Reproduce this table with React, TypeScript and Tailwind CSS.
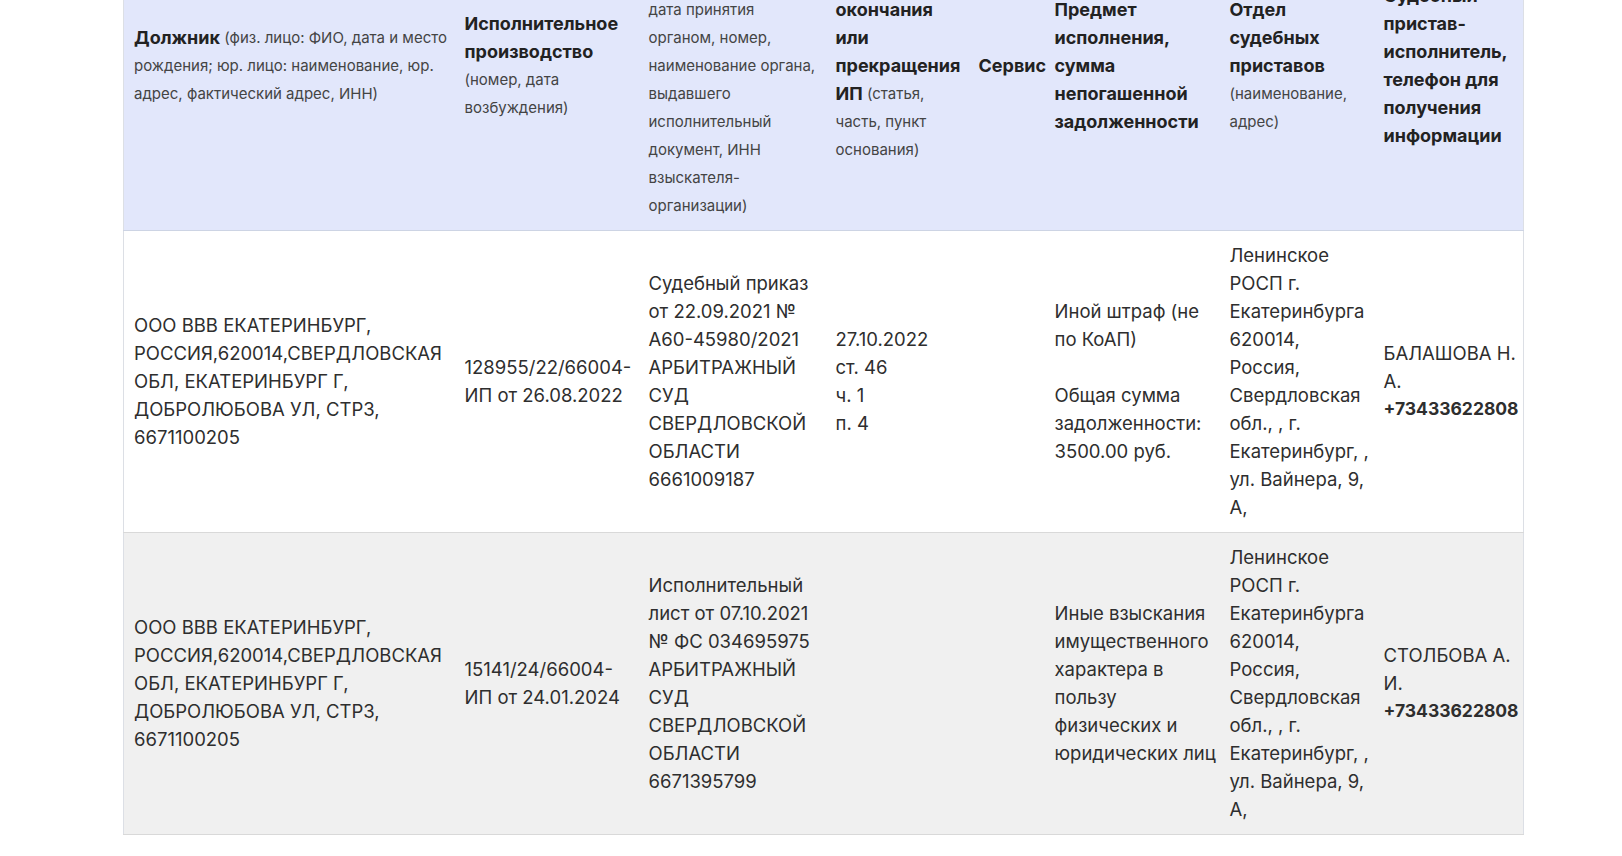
import React from 'react';

/** Строка таблицы исполнительных производств (строки ячеек — как в выдаче) */
interface Row {
  id: string;
  debtor: string[];
  proceeding: string[];
  document: string[];
  ending: string[];
  subject: string[];
  department: string[];
  officer: string[];
  phone: string;
}

const DEPARTMENT = [
  'Ленинское',
  'РОСП г.',
  'Екатеринбурга',
  '620014,',
  'Россия,',
  'Свердловская',
  'обл., , г.',
  'Екатеринбург, ,',
  'ул. Вайнера, 9,',
  'А,',
];

const DEBTOR = [
  'ООО ВВВ ЕКАТЕРИНБУРГ,',
  'РОССИЯ,620014,СВЕРДЛОВСКАЯ',
  'ОБЛ, ЕКАТЕРИНБУРГ Г,',
  'ДОБРОЛЮБОВА УЛ, СТР3,',
  '6671100205',
];

const rows: Row[] = [
  {
    id: '128955',
    debtor: DEBTOR,
    proceeding: ['128955/22/66004-', 'ИП от 26.08.2022'],
    document: [
      'Судебный приказ',
      'от 22.09.2021 №',
      'А60-45980/2021',
      'АРБИТРАЖНЫЙ',
      'СУД',
      'СВЕРДЛОВСКОЙ',
      'ОБЛАСТИ',
      '6661009187',
    ],
    ending: ['27.10.2022', 'ст. 46', 'ч. 1', 'п. 4'],
    subject: ['Иной штраф (не', 'по КоАП)', '', 'Общая сумма', 'задолженности:', '3500.00 руб.'],
    department: DEPARTMENT,
    officer: ['БАЛАШОВА Н.', 'А.'],
    phone: '+73433622808',
  },
  {
    id: '15141',
    debtor: DEBTOR,
    proceeding: ['15141/24/66004-', 'ИП от 24.01.2024'],
    document: [
      'Исполнительный',
      'лист от 07.10.2021',
      '№ ФС 034695975',
      'АРБИТРАЖНЫЙ',
      'СУД',
      'СВЕРДЛОВСКОЙ',
      'ОБЛАСТИ',
      '6671395799',
    ],
    ending: [],
    subject: [
      'Иные взыскания',
      'имущественного',
      'характера в',
      'пользу',
      'физических и',
      'юридических лиц',
    ],
    department: DEPARTMENT,
    officer: ['СТОЛБОВА А.', 'И.'],
    phone: '+73433622808',
  },
];

const th = 'pl-[10px] pr-0 py-[10px] align-middle text-left font-normal whitespace-nowrap';
const td = 'pl-[10px] pr-0 pt-[10px] pb-[11px] align-middle whitespace-nowrap';

function Lines({ lines }: { lines: string[] }) {
  return (
    <>
      {lines.map((line, i) => (
        <div key={i} className="h-[28px]">
          {line}
        </div>
      ))}
    </>
  );
}

/** жирный заголовок колонки */
const B = ({ children }: { children: React.ReactNode }) => (
  <span className="align-top font-bold text-[18px] text-[#222]">{children}</span>
);

/** пояснение мелким шрифтом */
const S = ({ children }: { children: React.ReactNode }) => (
  <span className="align-top text-[15px] text-[#444]">{children}</span>
);

export default function App() {
  return (
    <div className="h-[856px] overflow-hidden bg-white">
      {/* страница прокручена: шапка таблицы частично скрыта сверху */}
      <div className="-mt-[98px] pl-[123px]">
        <table className="w-[1400px] table-fixed border-collapse border-x border-[#dcdfe5] leading-[28px] font-['Inter',sans-serif] text-[18.5px] text-[#2e2e2e]">
          <colgroup>
            <col className="w-[331px]" />
            <col className="w-[184px]" />
            <col className="w-[187px]" />
            <col className="w-[143px]" />
            <col className="w-[76px]" />
            <col className="w-[175px]" />
            <col className="w-[154px]" />
            <col className="w-[150px]" />
          </colgroup>
          <thead className="bg-[#e2e7fb] text-[15px]">
            <tr className="border-b border-[#cdd4e4]">
              <th className={th}>
                <B>Должник</B>{' '}
                <S>
                  (физ. лицо: ФИО, дата и место
                  <br />
                  рождения; юр. лицо: наименование, юр.
                  <br />
                  адрес, фактический адрес, ИНН)
                </S>
              </th>
              <th className={th}>
                <B>
                  Исполнительное
                  <br />
                  производство
                </B>
                <br />
                <S>
                  (номер, дата
                  <br />
                  возбуждения)
                </S>
              </th>
              <th className={th}>
                <B>
                  Реквизиты
                  <br />
                  исполнительного
                  <br />
                  документа
                </B>{' '}
                <S>
                  (вид,
                  <br />
                  дата принятия
                  <br />
                  органом, номер,
                  <br />
                  наименование органа,
                  <br />
                  выдавшего
                  <br />
                  исполнительный
                  <br />
                  документ, ИНН
                  <br />
                  взыскателя-
                  <br />
                  организации)
                </S>
              </th>
              <th className={th}>
                <B>
                  Дата, причина
                  <br />
                  окончания
                  <br />
                  или
                  <br />
                  прекращения
                  <br />
                  ИП
                </B>{' '}
                <S>
                  (статья,
                  <br />
                  часть, пункт
                  <br />
                  основания)
                </S>
              </th>
              <th className={th}>
                <B>Сервис</B>
              </th>
              <th className={th}>
                <B>
                  Предмет
                  <br />
                  исполнения,
                  <br />
                  сумма
                  <br />
                  непогашенной
                  <br />
                  задолженности
                </B>
              </th>
              <th className={th}>
                <B>
                  Отдел
                  <br />
                  судебных
                  <br />
                  приставов
                </B>
                <br />
                <S>
                  (наименование,
                  <br />
                  адрес)
                </S>
              </th>
              <th className={th}>
                <B>
                  Судебный
                  <br />
                  пристав-
                  <br />
                  исполнитель,
                  <br />
                  телефон для
                  <br />
                  получения
                  <br />
                  информации
                </B>
              </th>
            </tr>
          </thead>
          <tbody>
            {rows.map((row, i) => (
              <tr
                key={row.id}
                className={`border-b border-[#d9d9d9] ${i % 2 ? 'bg-[#f0f0f0]' : 'bg-white'}`}
              >
                <td className={td}>
                  <Lines lines={row.debtor} />
                </td>
                <td className={td}>
                  <Lines lines={row.proceeding} />
                </td>
                <td className={td}>
                  <Lines lines={row.document} />
                </td>
                <td className={td}>
                  <Lines lines={row.ending} />
                </td>
                <td className={td}></td>
                <td className={td}>
                  <Lines lines={row.subject} />
                </td>
                <td className={td}>
                  <Lines lines={row.department} />
                </td>
                <td className={td}>
                  <Lines lines={row.officer} />
                  <div className="font-bold text-[17.5px]">{row.phone}</div>
                </td>
              </tr>
            ))}
          </tbody>
        </table>
      </div>
    </div>
  );
}
